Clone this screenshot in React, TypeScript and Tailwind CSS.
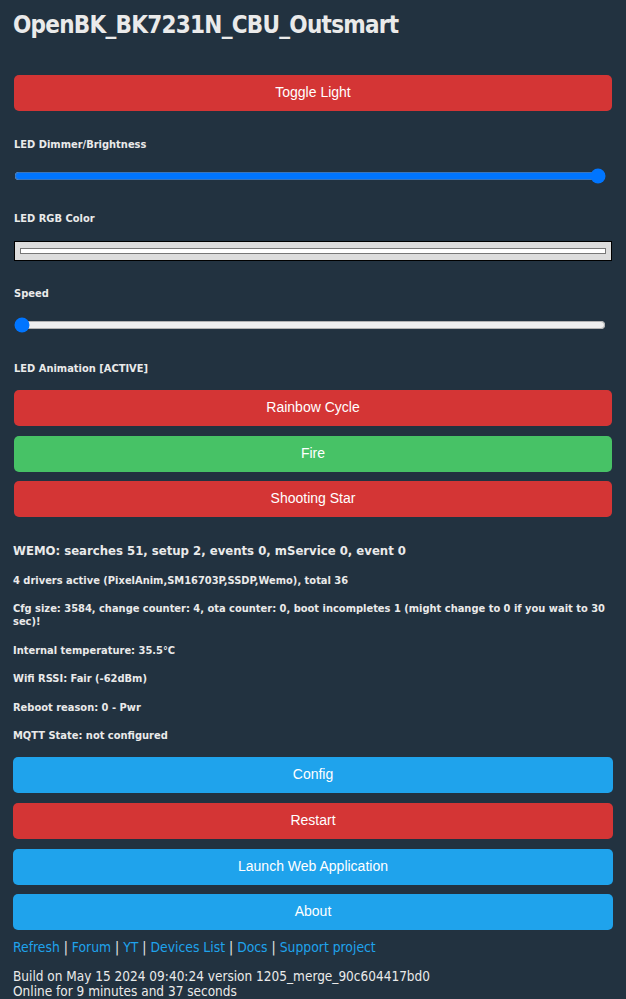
import React from "react";

const txt = "font-['DejaVu_Sans_Condensed','DejaVu_Sans',sans-serif]";

function Btn({ label, color, className = "" }: { label: string; color: string; className?: string }) {
  return (
    <button
      type="button"
      className={`w-full h-[36px] rounded-[5px] flex items-center justify-center pb-[2px] text-white text-[14px] font-['Liberation_Sans','Arial',sans-serif] ${color} ${className}`}
    >
      {label}
    </button>
  );
}

function Label({ children, className = "" }: { children: React.ReactNode; className?: string }) {
  return <div className={`text-[11px] leading-[13px] font-bold text-[#eaeaea] ${className}`}>{children}</div>;
}

function Info({ children, className = "" }: { children: React.ReactNode; className?: string }) {
  return <div className={`text-[11px] leading-[13px] font-bold text-[#eaeaea] ${className}`}>{children}</div>;
}

export default function App() {
  const red = "bg-[#d43535]";
  const green = "bg-[#47c266]";
  const blue = "bg-[#1fa3ec]";
  return (
    <div className={`min-h-screen w-full bg-[#223240] text-[#eaeaea] ${txt}`}>
      <div className="pl-[13px] pr-[13px] pt-[11px] pb-[4px] flex flex-col">
        <h1 className="text-[24px] leading-[28px] font-bold tracking-[-0.75px] text-[#eaeaea]">
          OpenBK_BK7231N_CBU_Outsmart
        </h1>

        <div className="mx-[1px] flex flex-col">
          <Btn label="Toggle Light" color={red} className="mt-[36px]" />

          <Label className="mt-[27px]">LED Dimmer/Brightness</Label>
          <div className="mt-[14px] h-[22px] flex items-center">
            <input type="range" min={0} max={100} defaultValue={100} className="w-[592px] m-0" />
          </div>

          <Label className="mt-[25px]">LED RGB Color</Label>
          <div className="mt-[16px] h-[20px] border border-black bg-[#dddddd] pl-[5px] pr-[5px] flex items-center">
            <div className="h-[6px] w-full border border-[#777777] bg-white" />
          </div>

          <Label className="mt-[26px]">Speed</Label>
          <div className="mt-[14px] h-[22px] flex items-center">
            <input type="range" min={0} max={100} defaultValue={0} className="w-[592px] m-0" />
          </div>

          <Label className="mt-[26px]">LED Animation [ACTIVE]</Label>
          <Btn label="Rainbow Cycle" color={red} className="mt-[15px]" />
          <Btn label="Fire" color={green} className="mt-[10px]" />
          <Btn label="Shooting Star" color={red} className="mt-[9px]" />
        </div>

        <div className="mt-[26px] text-[13px] leading-[16px] font-bold text-[#eaeaea]">
          WEMO: searches 51, setup 2, events 0, mService 0, event 0
        </div>
        <Info className="mt-[15px]">4 drivers active (PixelAnim,SM16703P,SSDP,Wemo), total 36</Info>
        <Info className="mt-[15px]">
          Cfg size: 3584, change counter: 4, ota counter: 0, boot incompletes 1 (might change to 0 if you wait to 30
          <br />
          sec)!
        </Info>
        <Info className="mt-[16px]">Internal temperature: 35.5°C</Info>
        <Info className="mt-[15px]">Wifi RSSI: Fair (-62dBm)</Info>
        <Info className="mt-[16px]">Reboot reason: 0 - Pwr</Info>
        <Info className="mt-[15px]">MQTT State: not configured</Info>

        <Btn label="Config" color={blue} className="mt-[15px]" />
        <Btn label="Restart" color={red} className="mt-[10px]" />
        <Btn label="Launch Web Application" color={blue} className="mt-[10px]" />
        <Btn label="About" color={blue} className="mt-[9px]" />

        <div className="mt-[9px] text-[13.8px] leading-[16px] text-[#eaeaea] whitespace-pre">
          <a className="text-[#1fa3ec]">Refresh</a>
          {" | "}
          <a className="text-[#1fa3ec]">Forum</a>
          {" | "}
          <a className="text-[#1fa3ec]">YT</a>
          {" | "}
          <a className="text-[#1fa3ec]">Devices List</a>
          {" | "}
          <a className="text-[#1fa3ec]">Docs</a>
          {" | "}
          <a className="text-[#1fa3ec]">Support project</a>
        </div>

        <div className="mt-[14px] text-[13.5px] leading-[15px] text-[#eaeaea]">
          <div>Build on May 15 2024 09:40:24 version 1205_merge_90c604417bd0</div>
          <div>Online for 9 minutes and 37 seconds</div>
        </div>
      </div>
    </div>
  );
}
